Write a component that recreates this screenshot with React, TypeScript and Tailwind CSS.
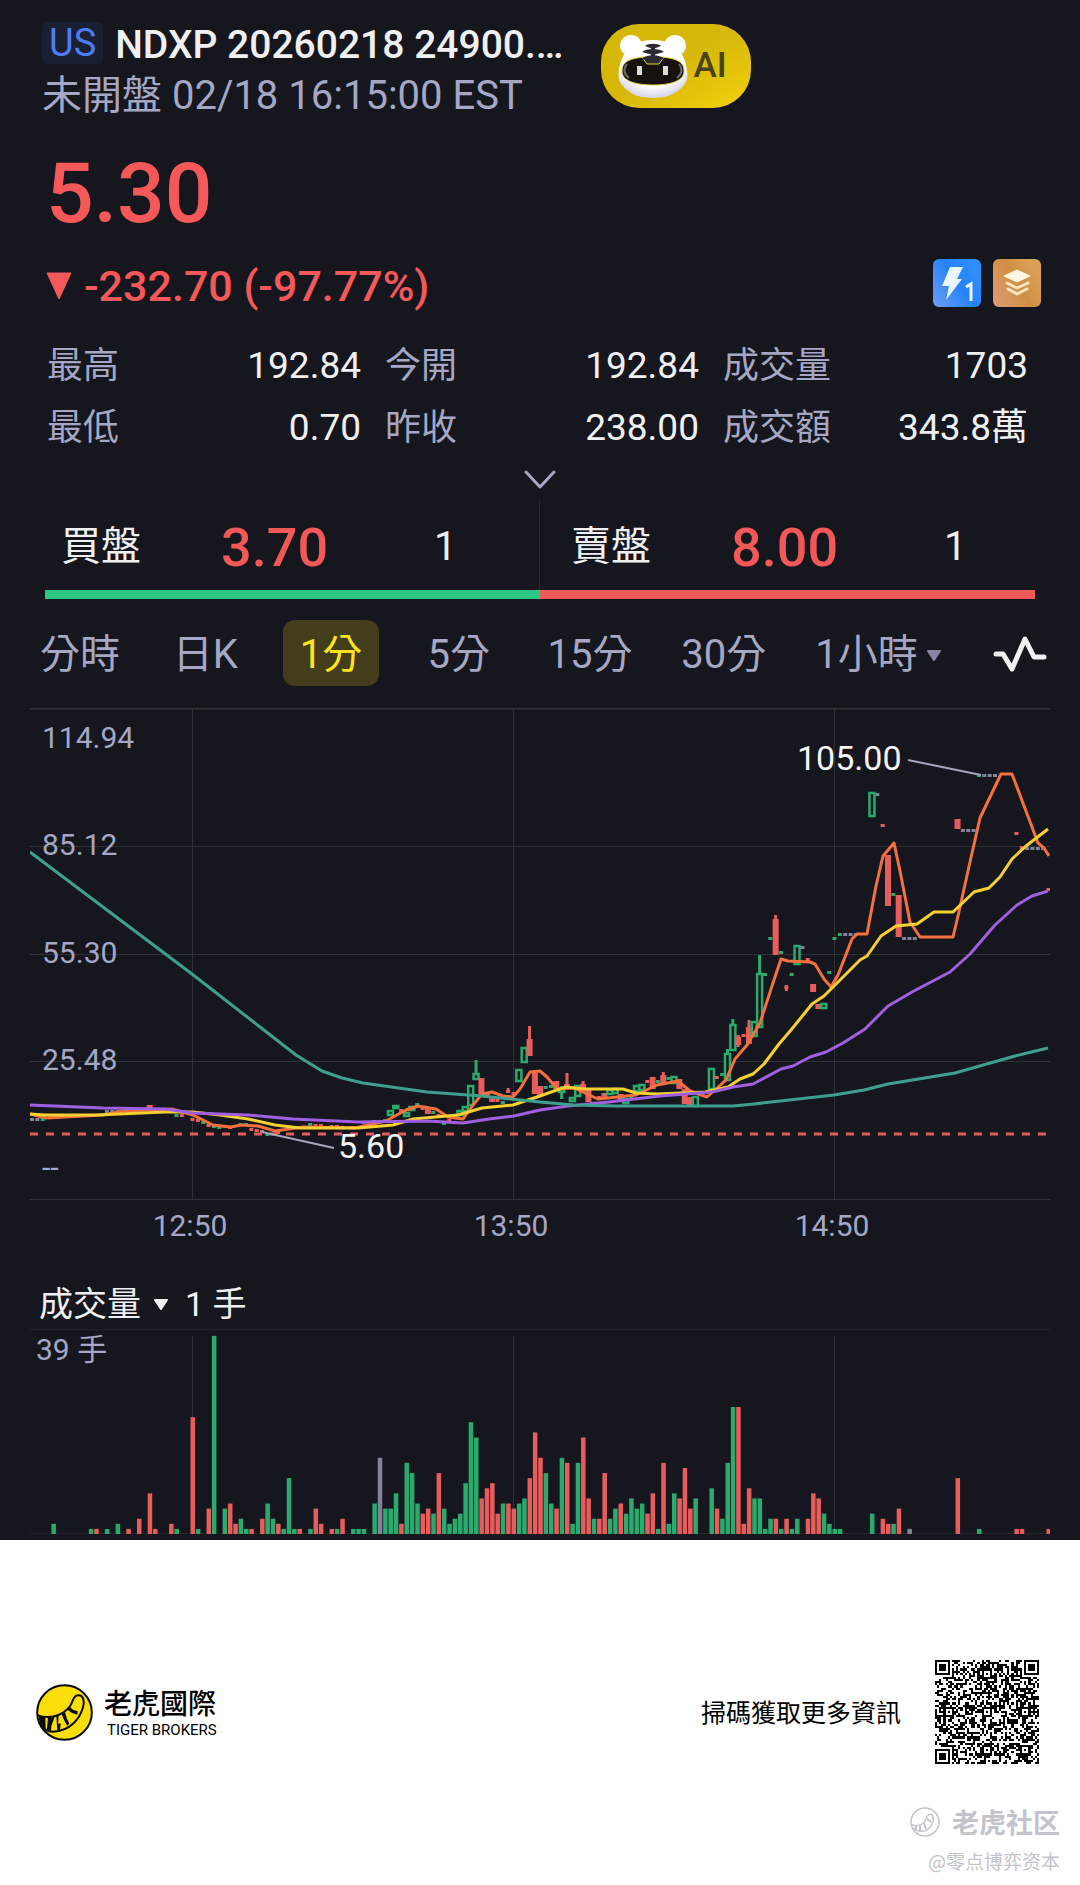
import { clsx } from 'clsx';
import type { ReactNode } from 'react';

type Tone = 'up' | 'down' | 'flat';

const toneColor: Record<Tone, string> = {
  up: '#2aaa6d',
  down: '#e95c5c',
  flat: '#82849c',
};

const stats = [
  { label: '最高', value: '192.84' },
  { label: '今開', value: '192.84' },
  { label: '成交量', value: '1703' },
  { label: '最低', value: '0.70' },
  { label: '昨收', value: '238.00' },
  { label: '成交額', value: '343.8萬' },
];

const periods = ['分時', '日K', '1分', '5分', '15分', '30分', '1小時'];

// Distance between two minute bars, in chart units
const STEP = 5.35;
const barX = (i: number) => 2 + i * STEP;

// [minute, body top, body bottom, tone, high, low]
type Candle = [number, number, number, Tone, number?, number?];

const candles: Candle[] = [
  [0, 410, 411, 'flat'], [1, 410, 411, 'flat'], [2, 410, 411, 'up'],
  [14, 402, 403, 'flat'], [15, 402, 403, 'flat'], [16, 402, 403, 'flat'],
  [22, 397, 401, 'down'], [27, 406, 408, 'up'], [28, 406, 407, 'down'],
  [30, 410, 412, 'down'], [31, 411, 413, 'down'], [32, 413, 414, 'up'], [33, 416, 417, 'down'],
  [34, 417, 420, 'up'], [35, 418, 419, 'up'], [36, 417, 418, 'down'], [37, 418, 421, 'down'],
  [39, 415, 417, 'up'], [40, 415, 417, 'up'], [41, 420, 423, 'down'], [42, 421, 422, 'down'],
  [43, 422, 423, 'down'], [44, 425, 426, 'up'], [46, 423, 424, 'down'],
  [52, 415, 418, 'up'], [53, 416, 417, 'down'], [54, 416, 417, 'down'],
  [56, 417, 418, 'down'], [57, 417, 419, 'down'], [58, 418, 419, 'down'], [60, 418, 419, 'down'],
  [62, 413, 414, 'flat'], [63, 413, 414, 'up'], [64, 412, 413, 'flat'], [65, 412, 413, 'up'], [66, 411, 412, 'up'],
  [67, 402, 408, 'up'], [68, 397, 401, 'up'], [69, 401, 402, 'down'], [70, 404, 409, 'up'],
  [71, 398, 403, 'up'], [72, 395, 398, 'up'], [73, 399, 400, 'down'], [74, 400, 406, 'down'],
  [75, 403, 405, 'up'], [76, 406, 408, 'down'], [77, 414, 417, 'up'], [78, 411, 413, 'down'],
  [79, 407, 409, 'up'], [80, 402, 408, 'up'], [81, 398, 404, 'up'], [82, 377, 398, 'up'],
  [83, 365, 372, 'up', 352], [84, 370, 387, 'down'], [85, 386, 390, 'down'], [86, 390, 394, 'down'],
  [87, 391, 394, 'down'], [88, 393, 396, 'up'], [89, 382, 384, 'down', 380], [90, 384, 385, 'down'],
  [91, 361, 374, 'up'], [92, 339, 355, 'up'], [93, 331, 348, 'down', 318], [94, 365, 386, 'down'],
  [95, 378, 387, 'down'], [96, 378, 380, 'up'], [97, 377, 379, 'up'], [98, 373, 381, 'down'],
  [99, 380, 385, 'up', 378, 391], [100, 376, 381, 'down', 365], [101, 389, 394, 'up'], [102, 377, 389, 'up'],
  [103, 376, 383, 'down', 373], [104, 381, 394, 'down'], [105, 394, 398, 'up'], [106, 388, 391, 'down'],
  [107, 385, 390, 'down'], [108, 381, 387, 'up'], [109, 380, 386, 'up'], [110, 386, 394, 'down'],
  [111, 390, 396, 'up'], [112, 387, 389, 'up'], [113, 377, 384, 'up'], [114, 376, 383, 'up'],
  [115, 372, 374, 'down'], [116, 369, 381, 'down'], [117, 372, 374, 'up'], [118, 367, 375, 'down', 364],
  [119, 369, 372, 'up'], [120, 368, 376, 'up'], [121, 371, 381, 'down'], [122, 381, 396, 'down'],
  [123, 389, 397, 'down'], [124, 388, 399, 'up'], [125, 384, 385, 'up'], [127, 360, 382, 'up'],
  [128, 368, 371, 'down'], [129, 365, 367, 'up'], [130, 345, 373, 'up', 341], [131, 316, 343, 'up', 311],
  [132, 329, 337, 'down', 327, 339], [133, 326, 327, 'down'], [134, 319, 336, 'down', 312],
  [135, 313, 329, 'up'], [136, 265, 320, 'up', 247], [137, 265, 266, 'up'], [138, 229, 230, 'up'],
  [139, 211, 247, 'down', 207], [140, 243, 245, 'up'], [141, 278, 281, 'down', 277, 283],
  [142, 265, 266, 'up'], [143, 237, 257, 'up'], [144, 238, 239, 'flat'], [145, 250, 251, 'down'],
  [146, 276, 284, 'down'], [147, 296, 301, 'down'], [148, 295, 301, 'up'], [149, 263, 264, 'up'],
  [150, 229, 230, 'up'], [151, 225, 227, 'up'], [152, 225, 227, 'flat'], [153, 225, 227, 'flat'],
  [154, 225, 227, 'flat'], [157, 84, 109, 'up'], [158, 85, 86, 'flat'], [159, 116, 117, 'down'],
  [160, 147, 198, 'down'], [161, 185, 187, 'up'], [162, 187, 229, 'down'], [163, 229, 230, 'flat'],
  [164, 229, 230, 'flat'], [165, 229, 230, 'flat'], [173, 111, 121, 'down'], [174, 121, 123, 'flat'],
  [175, 121, 123, 'flat'], [176, 121, 123, 'flat'], [177, 66, 67, 'up'], [178, 66, 67, 'flat'],
  [179, 66, 67, 'flat'], [180, 66, 67, 'flat'], [184, 124, 125, 'down'], [185, 138, 140, 'down'],
  [186, 139, 140, 'flat'], [187, 139, 140, 'flat'], [188, 139, 140, 'flat'], [189, 139, 140, 'flat'],
  [190, 180, 182, 'down'],
];

const averages = [
  {
    name: 'MA5',
    color: '#f4703c',
    points:
      '0,406 16,410 73,407 94,403 142,401 163,407 183,417 201,419 211,417 228,418 245,423 273,419 325,420 356,413 376,402 388,398 406,401 418,409 433,411 443,397 452,386 462,384 473,388 483,389 490,381 500,364 510,363 517,369 527,381 544,380 568,391 606,387 627,377 648,373 660,383 677,389 696,372 705,351 717,337 730,315 742,278 751,251 758,253 780,254 785,256 794,271 801,279 808,267 822,231 827,226 837,226 846,178 853,148 864,135 870,163 880,214 890,229 923,229 928,208 940,154 950,110 971,66 982,66 1008,135 1014,140 1019,148',
  },
  {
    name: 'MA10',
    color: '#f6cf30',
    points:
      '0,406 15,407 66,407 135,404 163,404 190,407 218,411 245,417 270,420 328,420 363,417 383,411 428,407 452,400 483,397 510,388 524,383 536,379 555,381 593,381 606,385 627,386 675,384 698,379 710,371 723,366 734,356 749,336 761,322 782,296 794,288 806,276 830,252 837,248 851,228 866,218 887,216 904,204 923,204 944,184 959,180 970,169 982,151 996,138 1018,121',
  },
  {
    name: 'MA20',
    color: '#a05fe0',
    points:
      '0,397 73,400 135,401 163,405 218,407 263,411 328,414 397,413 433,415 459,411 484,408 497,405 510,402 538,398 579,394 630,388 682,384 703,379 723,376 751,361 763,358 780,349 796,344 813,335 835,321 858,298 882,284 920,264 940,246 965,217 987,197 1002,188 1018,183',
  },
  {
    name: 'MA60',
    color: '#3f9f8f',
    points:
      '0,144 162,266 239,326 266,347 292,363 312,370 333,375 397,384 452,388 510,394 544,397 586,398 703,398 724,396 804,387 834,382 858,376 925,365 985,348 1018,340',
  },
];

const priceLabels = [
  { text: '114.94', y: 40 },
  { text: '85.12', y: 147 },
  { text: '55.30', y: 255 },
  { text: '25.48', y: 362 },
  { text: '--', y: 470 },
];

const timeLabels = [
  { text: '12:50', x: 162 },
  { text: '13:50', x: 483 },
  { text: '14:50', x: 804 },
];

// [minute, lots, tone]
const volumes: [number, number, Tone][] = [
  [4, 2, 'up'], [11, 1, 'up'], [12, 1, 'down'], [14, 1, 'up'], [16, 2, 'up'], [18, 1, 'down'],
  [20, 3, 'down'], [22, 8, 'down'], [23, 1, 'down'], [26, 2, 'down'], [27, 1, 'up'], [30, 23, 'down'],
  [31, 1, 'up'], [33, 5, 'down'], [34, 39, 'up'], [36, 5, 'up'], [37, 6, 'down'], [38, 2, 'down'],
  [39, 3, 'up'], [40, 1, 'up'], [41, 1, 'down'], [43, 3, 'down'], [44, 6, 'up'], [45, 3, 'up'],
  [46, 2, 'down'], [47, 1, 'up'], [48, 11, 'up'], [49, 1, 'up'], [50, 1, 'down'], [52, 1, 'up'],
  [53, 5, 'down'], [54, 2, 'down'], [56, 1, 'down'], [57, 1, 'up'], [58, 3, 'down'], [60, 1, 'up'],
  [61, 1, 'up'], [62, 1, 'up'], [64, 6, 'up'], [65, 15, 'flat'], [66, 5, 'up'], [67, 5, 'up'],
  [68, 8, 'up'], [69, 2, 'down'], [70, 14, 'up'], [71, 12, 'up'], [72, 6, 'up'], [73, 4, 'down'],
  [74, 5, 'down'], [75, 4, 'up'], [76, 12, 'down'], [77, 5, 'up'], [78, 2, 'up'], [79, 3, 'up'],
  [80, 4, 'up'], [81, 10, 'up'], [82, 22, 'up'], [83, 19, 'up'], [84, 7, 'down'], [85, 9, 'down'],
  [86, 10, 'down'], [87, 4, 'down'], [88, 6, 'up'], [89, 6, 'down'], [90, 5, 'down'], [91, 6, 'up'],
  [92, 7, 'up'], [93, 11, 'down'], [94, 20, 'down'], [95, 15, 'down'], [96, 12, 'up'], [97, 6, 'up'],
  [98, 5, 'down'], [99, 15, 'up'], [100, 14, 'down'], [101, 2, 'up'], [102, 14, 'up'], [103, 19, 'down'],
  [104, 7, 'down'], [105, 3, 'up'], [106, 3, 'down'], [107, 12, 'down'], [108, 3, 'up'], [109, 5, 'up'],
  [110, 6, 'down'], [111, 4, 'up'], [112, 7, 'up'], [113, 5, 'up'], [114, 6, 'up'], [115, 4, 'down'],
  [116, 8, 'down'], [117, 1, 'up'], [118, 14, 'down'], [119, 2, 'up'], [120, 8, 'up'], [121, 7, 'down'],
  [122, 13, 'down'], [123, 5, 'down'], [124, 7, 'up'], [127, 9, 'up'], [128, 5, 'down'], [129, 3, 'up'],
  [130, 14, 'up'], [131, 25, 'up'], [132, 25, 'down'], [133, 2, 'down'], [134, 9, 'down'], [135, 7, 'up'],
  [136, 7, 'up'], [137, 1, 'up'], [138, 3, 'up'], [139, 3, 'down'], [140, 1, 'up'], [141, 3, 'down'],
  [142, 1, 'up'], [143, 3, 'up'], [145, 3, 'down'], [146, 8, 'down'], [147, 7, 'down'], [148, 4, 'up'],
  [149, 2, 'up'], [150, 1, 'up'], [151, 1, 'up'], [157, 4, 'up'], [159, 3, 'down'], [160, 2, 'down'],
  [161, 2, 'up'], [162, 5, 'down'], [164, 1, 'flat'], [173, 11, 'down'], [177, 1, 'up'], [184, 1, 'down'],
  [185, 1, 'down'], [190, 1, 'down'],
];

const MascotIcon = () => (
  <svg viewBox="0 0 72 66" className="h-[66px] w-[72px]" aria-hidden="true">
    <defs>
      <radialGradient id="head" cx="50%" cy="35%" r="65%">
        <stop offset="70%" stopColor="#ffffff" />
        <stop offset="100%" stopColor="#d5d3e6" />
      </radialGradient>
    </defs>
    <circle cx="14" cy="13" r="11" fill="url(#head)" />
    <circle cx="58" cy="13" r="11" fill="url(#head)" />
    <path d="M36 7C52 7 63 14 68 28C71 38 72 46 67 52C60 61 50 65 36 65C22 65 12 61 5 52C0 46 1 38 4 28C9 14 20 7 36 7Z" fill="url(#head)" />
    <path d="M36 24C56 24 67 27 67 38C67 48 54 52 36 52C18 52 5 48 5 38C5 27 16 24 36 24Z" fill="#17120d" stroke="#e2cf35" strokeWidth="1" />
    <path d="M10 31C6 36 7 41 12 45M62 31C66 36 65 41 60 45" fill="none" stroke="#6c6a78" strokeWidth="2" />
    <path d="M25 24H47L42 31H30Z" fill="#2b2a33" stroke="#e2cf35" strokeWidth="1" />
    <path d="M28 13C31 10 41 10 44 13L36 16ZM25 19C29 15 43 15 47 19L36 22ZM25 26C29 21 43 21 47 26L36 28Z" fill="#2b2a33" />
    <rect x="34" y="12" width="4" height="15" fill="#2b2a33" />
    <rect x="20" y="33" width="5" height="9" fill="#dcdcdc" />
    <rect x="46" y="33" width="5" height="9" fill="#dcdcdc" />
  </svg>
);

const QuoteLevelIcon = () => (
  <svg viewBox="0 0 48 48" className="size-12" role="img" aria-label="即時行情">
    <defs>
      <linearGradient id="level" x1="0" y1="1" x2="1" y2="0.3">
        <stop offset="0%" stopColor="#6f9dfb" />
        <stop offset="60%" stopColor="#2483f8" />
        <stop offset="100%" stopColor="#2f90fb" />
      </linearGradient>
    </defs>
    <rect width="48" height="48" rx="6" fill="url(#level)" />
    <path d="M17 8H30L24 20H29L13 41L16 27H9Z" fill="#e9f6ff" strokeLinejoin="round" />
    <path d="M33 28L38 25V42" fill="none" stroke="#e9f6ff" strokeWidth="3" />
  </svg>
);

const DepthIcon = () => (
  <svg viewBox="0 0 48 48" className="size-12" role="img" aria-label="深度行情">
    <defs>
      <linearGradient id="depth" x1="0" y1="1" x2="1" y2="0.4">
        <stop offset="0%" stopColor="#dd9c76" />
        <stop offset="60%" stopColor="#d09044" />
        <stop offset="100%" stopColor="#dba056" />
      </linearGradient>
    </defs>
    <rect width="48" height="48" rx="6" fill="url(#depth)" />
    <path d="M24 11L37 17L24 23L11 17Z" fill="#fff6e2" stroke="#fff6e2" strokeLinejoin="round" />
    <path d="M14 24L24 29L35 24M15 30L24 35L34 30" fill="none" stroke="#fbe6c4" strokeWidth="3" strokeLinecap="round" strokeLinejoin="round" />
  </svg>
);

const Triangle = ({ className }: { className?: string }) => (
  <svg viewBox="0 0 16 11" className={clsx('h-[11px] w-4', className)} aria-hidden="true">
    <path d="M2 1H14L8 10Z" fill="currentColor" stroke="currentColor" strokeWidth="2" strokeLinejoin="round" />
  </svg>
);

const Gridlines = ({ top, bottom }: { top: number; bottom: number }) => (
  <>
    {timeLabels.map(({ x }) => (
      <line key={x} x1={x + 0.5} x2={x + 0.5} y1={top} y2={bottom} stroke="#303137" />
    ))}
  </>
);

const PriceChart = () => (
  <svg viewBox="0 0 1020 540" className="block h-auto w-full" role="img" aria-label="1分 K線">
    <line x1="0" x2="1020" y1="0.5" y2="0.5" stroke="#303137" strokeWidth="2" />
    {[138, 246, 353, 491].map((y) => (
      <line key={y} x1="0" x2="1020" y1={y + 0.5} y2={y + 0.5} stroke="#303137" />
    ))}
    <Gridlines top={0} bottom={491} />

    <g fill="#a5a7c4" fontSize="30">
      {priceLabels.map(({ text, y }) => (
        <text key={text} x="12" y={y}>{text}</text>
      ))}
      {timeLabels.map(({ text, x }) => (
        <text key={text} x={x - 2} y="528" textAnchor="middle">{text}</text>
      ))}
    </g>

    <line x1="0" x2="1018" y1="426" y2="426" stroke="#e25d5d" strokeWidth="3" strokeDasharray="8 8" />

    {candles.map(([i, top, bottom, tone, high, low]) => {
      const x = barX(i);
      const color = toneColor[tone];
      const height = bottom - top;
      const hollow = tone === 'up' && height > 3;
      return (
        <g key={i}>
          {high !== undefined && <line x1={x} x2={x} y1={high} y2={top} stroke={color} strokeWidth="3" />}
          {low !== undefined && <line x1={x} x2={x} y1={bottom} y2={low} stroke={color} strokeWidth="3" />}
          {hollow ? (
            <rect x={x - 2.5} y={top + 1} width="5" height={height - 2} fill="#16171e" stroke={color} strokeWidth="2.5" />
          ) : (
            <rect x={x - (height > 3 ? 3 : 2)} y={top} width={height > 3 ? 6 : 4} height={Math.max(height, 3)} fill={color} />
          )}
        </g>
      );
    })}

    {averages.map(({ name, color, points }) => (
      <polyline key={name} points={points} fill="none" stroke={color} strokeWidth="3" strokeLinejoin="round" />
    ))}

    <g stroke="#a5a7bd" strokeWidth="2">
      <line x1="878" y1="52" x2="951" y2="67" />
      <line x1="232" y1="424" x2="304" y2="440" />
    </g>
    <g fill="#f4f4f6" fontSize="34">
      <text x="767" y="62">105.00</text>
      <text x="308" y="450">5.60</text>
    </g>
  </svg>
);

const VolumeChart = () => (
  <svg viewBox="0 0 1020 206" className="block h-auto w-full" role="img" aria-label="成交量">
    <line x1="0" x2="1020" y1="0.5" y2="0.5" stroke="#23242b" />
    <line x1="0" x2="1020" y1="204.5" y2="204.5" stroke="#23242b" />
    <Gridlines top={7} bottom={205} />
    {volumes.map(([i, lots, tone]) => (
      <rect
        key={i}
        x={barX(i) - 2}
        y={205 - lots * 5.08}
        width="4.5"
        height={lots * 5.08}
        fill={toneColor[tone]}
      />
    ))}
    <text x="6" y="31" fill="#a5a7c4" fontSize="30">39 手</text>
  </svg>
);

const QR_SIZE = 49;

const inFinder = (x: number, y: number) => {
  const corners = [[0, 0], [QR_SIZE - 7, 0], [0, QR_SIZE - 7]];
  for (const [cx, cy] of corners) {
    const d = Math.max(Math.abs(x - cx - 3), Math.abs(y - cy - 3));
    if (d <= 4) return d !== 2 && d !== 4;
  }
  return null;
};

const inAlignment = (x: number, y: number) => {
  for (const cx of [6, 24, 42]) {
    for (const cy of [6, 24, 42]) {
      const d = Math.max(Math.abs(x - cx), Math.abs(y - cy));
      if (d <= 2) return d !== 1;
    }
  }
  return null;
};

const qrPath = () => {
  let seed = 20260218;
  let path = '';
  for (let y = 0; y < QR_SIZE; y++) {
    for (let x = 0; x < QR_SIZE; x++) {
      seed = (seed * 48271) % 2147483647;
      const timing = x === 6 || y === 6 ? (x + y) % 2 === 0 : null;
      const dark = inFinder(x, y) ?? inAlignment(x, y) ?? timing ?? seed / 2147483647 < 0.52;
      if (dark) path += `M${x} ${y}h1v1h-1z`;
    }
  }
  return path;
};

const QrCode = () => (
  <svg viewBox="0 0 49 49" className="size-[104px]" role="img" aria-label="QR code" shapeRendering="crispEdges">
    <path d={qrPath()} fill="#000" />
  </svg>
);

const TigerLogo = () => (
  <svg viewBox="0 0 171 171" className="size-[57px]" aria-hidden="true">
    <circle cx="85.5" cy="85.5" r="82" fill="#fade0a" stroke="#0b0b0b" strokeWidth="6" />
    <path
      d="M5 94C45 108 82 92 101 68C112 54 110 34 127 34C143 34 146 52 141 70C132 104 102 141 52 143C40 143 26 138 16 126"
      fill="#fade0a"
      stroke="#0b0b0b"
      strokeWidth="6"
    />
    <path d="M6 94L28 100L29 138L14 126ZM36 101L56 99L46 126L45 142L32 141ZM61 97L68 95L66 119L74 118L72 139L64 140ZM77 91L87 85L93 104L100 118L94 126L84 108ZM95 77L102 70L112 78L125 82L124 92L107 86Z" fill="#0b0b0b" />
  </svg>
);

const WatermarkLogo = () => (
  <svg viewBox="0 0 30 30" className="size-[30px]" fill="none" stroke="#c3c4c9" aria-hidden="true">
    <circle cx="15" cy="15" r="14" strokeWidth="1.5" />
    <path d="M2 18C9 20 14 17 16 12C17 8 20 6 22 8C25 12 22 22 14 24C9 25 5 23 4 21" strokeWidth="1.5" />
    <path d="M6 19V23M10 19V24M14 16L16 22M17 12L21 15" strokeWidth="2" />
  </svg>
);

interface BookSideProps {
  label: string;
  price: string;
  size: string;
  className?: string;
}

const BookSide = ({ label, price, size, className }: BookSideProps) => (
  <div className={clsx('flex h-[90px] items-center pt-1 text-[40px] text-[#f0f0f3]', className)}>
    <span className="w-[160px]">{label}</span>
    <span className="w-[213px] text-[54px] font-medium text-[#f25858]">{price}</span>
    <span>{size}</span>
  </div>
);

const Section = ({ children, className }: { children: ReactNode; className?: string }) => (
  <section className={clsx('px-[30px]', className)}>{children}</section>
);

export default function App() {
  return (
    <div className="font-['Roboto','Noto_Sans_CJK_TC',sans-serif]">
      <main className="bg-[#16171e] pt-5 pb-[5px]">
        {/* Quote header */}
        <header className="flex items-start gap-[38px] px-[42px]">
          <div>
            <div className="flex items-center gap-3">
              <span className="rounded-md bg-[#1b1f32] px-[7px] text-[38px] leading-[42px] text-[#4c7df6]">US</span>
              <h1 className="pt-1 text-[39px] leading-[42px] font-medium text-[#f0f0f3]">NDXP 20260218 24900.…</h1>
            </div>
            <p className="text-[40px] leading-[60px] text-[#a5a7c4]">未開盤 02/18 16:15:00 EST</p>
          </div>
          <button
            type="button"
            className="mt-1 flex h-[84px] w-[150px] items-center gap-1 rounded-[38px] bg-linear-to-br from-[#d3b606] via-[#d8b80a] to-[#f2d20a] pl-4 text-[35px] font-medium text-[#4a431a]"
          >
            <MascotIcon />
            AI
          </button>
        </header>

        {/* Last price */}
        <div className="mt-6 pr-[39px] pl-[46px] font-medium text-[#f55858]">
          <p className="text-[84px] leading-[88px]">5.30</p>
          <div className="mt-[21px] flex items-start justify-between">
            <p className="flex items-center gap-3 text-[43px] leading-[54px]">
              <svg viewBox="0 0 26 28" className="h-7 w-[26px]" aria-hidden="true">
                <path d="M1 1H25L13 27Z" fill="currentColor" stroke="currentColor" strokeLinejoin="round" />
              </svg>
              -232.70 (-97.77%)
            </p>
            <div className="flex gap-3">
              <QuoteLevelIcon />
              <DepthIcon />
            </div>
          </div>
        </div>

        {/* Day stats */}
        <dl className="mt-[22px] grid grid-cols-[315fr_315fr_306fr] gap-x-6 pr-[52px] pl-[47px]">
          {stats.map(({ label, value }) => (
            <div key={label} className="flex justify-between leading-[62px]">
              <dt className="text-[36px] text-[#a5a7c4]">{label}</dt>
              <dd className="text-[37px] text-[#f0f0f3]">{value}</dd>
            </div>
          ))}
        </dl>
        <button type="button" aria-label="展開" className="flex h-[41px] w-full items-center justify-center">
          <svg viewBox="0 0 32 20" className="h-5 w-8" fill="none" aria-hidden="true">
            <path d="M2 2L16 17L30 2" stroke="#a5a7c4" strokeWidth="3" strokeLinecap="round" strokeLinejoin="round" />
          </svg>
        </button>

        {/* Best bid / ask */}
        <div className="mx-[45px] grid grid-cols-2">
          <BookSide label="買盤" price="3.70" size="1" className="border-r border-[#26272f] pl-4" />
          <BookSide label="賣盤" price="8.00" size="1" className="pl-[31px]" />
          <div className="h-[9px] bg-[#2bc780]" />
          <div className="h-[9px] bg-[#f05a58]" />
        </div>

        {/* Period tabs */}
        <nav className="mt-[21px] grid grid-cols-[133fr_127fr_128fr_120fr_134fr_134fr_195fr_auto] items-center pr-[33px] pl-[23px]">
          {periods.map((period) => (
            <button
              key={period}
              type="button"
              className={clsx(
                'flex h-[66px] items-center gap-2 justify-self-start rounded-xl px-[17px] pt-1 text-[40px] whitespace-nowrap',
                period === '1分' ? 'bg-[#433d1b] text-[#fbe31f]' : 'text-[#a5a7c4]',
              )}
            >
              {period}
              {period === '1小時' && <Triangle className="text-[#8587a3]" />}
            </button>
          ))}
          <button type="button" aria-label="指標">
            <svg viewBox="0 0 54 38" className="h-[38px] w-[54px]" fill="none" aria-hidden="true">
              <path d="M3 20H10L19 35L32 5L41 23H51" stroke="#f0f0f3" strokeWidth="5" strokeLinecap="round" strokeLinejoin="round" />
            </svg>
          </button>
        </nav>

        <Section className="mt-[22px]">
          <PriceChart />
        </Section>

        <Section className="mt-9">
          <button type="button" className="mb-[5px] flex items-center pl-[9px] text-[34px] leading-10 text-[#f0f0f3]">
            成交量
            <Triangle className="mr-4 ml-3" />
            1 手
          </button>
          <VolumeChart />
        </Section>
      </main>

      <footer className="bg-white text-black">
        <div className="flex items-center justify-between pt-[120px] pr-[41px] pl-9">
          <div className="flex items-center gap-[11px]">
            <TigerLogo />
            <div className="pt-1">
              <p className="text-[28px] leading-8 font-medium">老虎國際</p>
              <p className="pl-[3px] text-[15px] leading-[18px]">TIGER BROKERS</p>
            </div>
          </div>
          <div className="flex items-center gap-[34px]">
            <p className="pt-1 text-[25px]">掃碼獲取更多資訊</p>
            <QrCode />
          </div>
        </div>
        <div className="flex flex-col items-end pt-10 pr-5 pb-3 font-['Noto_Sans_CJK_SC',sans-serif] text-[#c3c4c9]">
          <p className="flex items-center gap-3 text-[27px] leading-9 font-bold">
            <WatermarkLogo />
            老虎社区
          </p>
          <p className="mt-2 text-[19px] leading-[25px]">@零点博弈资本</p>
        </div>
      </footer>
    </div>
  );
}
